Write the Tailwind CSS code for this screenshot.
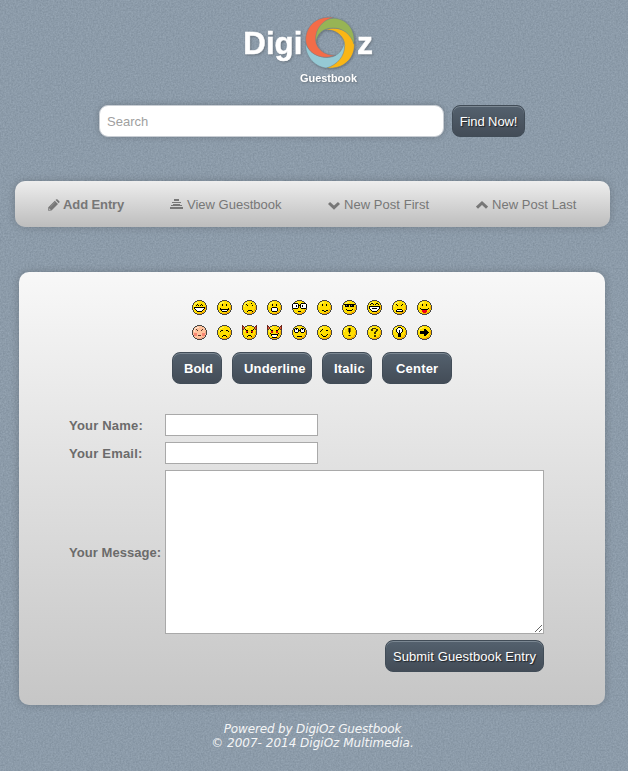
<!DOCTYPE html>
<html lang="en">
<head>
<meta charset="utf-8">
<title>DigiOz Guestbook</title>
<script src="https://cdn.jsdelivr.net/npm/@tailwindcss/browser@4"></script>
</head>
<body class="relative isolate h-[771px] w-[628px] overflow-hidden bg-[#8c9baa] font-['Liberation_Sans',Arial,sans-serif] text-[13px] leading-4 text-[#6b6b6b]">
<!-- Page grain -->
<svg class="absolute inset-0 -z-10" width="628" height="771" aria-hidden="true">
  <filter id="grain" x="0" y="0" width="100%" height="100%" color-interpolation-filters="sRGB">
    <feTurbulence type="fractalNoise" baseFrequency="0.6" numOctaves="2" seed="4"/>
    <feColorMatrix values="0.12 0 0 0 0.489  0.12 0 0 0 0.548  0.12 0 0 0 0.604  0 0 0 0 1"/>
  </filter>
  <rect width="628" height="771" filter="url(#grain)"/>
</svg>

<header class="flex flex-col">
  <svg class="mt-2 ml-[234px] h-[84px] w-[150px] drop-shadow-[1px_1px_1px_rgba(0,0,0,0.25)]" viewBox="0 0 450 252" aria-label="DigiOz Guestbook">
    <g stroke="#71808c" stroke-width="1.5">
      <path fill="#95c9d4" d="M215 105C225 135 255 150 285 148C315 146 330 120 332 95C342 140 315 180 285 180C245 182 212 145 215 105Z"/>
      <path fill="#fab615" d="M272 66C300 52 361 65 361 112C361 150 330 185 278 180C310 170 332 145 332 112C332 85 305 62 272 66Z"/>
      <path fill="#97b455" d="M245 108C238 62 262 31 298 31C335 31 365 62 360 108C350 78 326 60 298 60C264 60 248 80 245 108Z"/>
      <path fill="#f36c48" d="M300 28C240 22 215 62 215 95C215 132 258 160 305 142C272 144 247 122 245 97C243 65 264 36 300 28Z"/>
    </g>
    <g fill="#fff" font-family="Liberation Sans, Arial, sans-serif" font-weight="700">
      <text x="28" y="137" font-size="94" stroke="#fff" stroke-width="1.5" textLength="177" lengthAdjust="spacingAndGlyphs">Digi</text>
      <text x="369" y="137" font-size="94" stroke="#fff" stroke-width="1.5" textLength="48" lengthAdjust="spacingAndGlyphs">z</text>
      <text x="198" y="221" font-size="32" textLength="171" lengthAdjust="spacingAndGlyphs">Guestbook</text>
    </g>
  </svg>
  <form class="mt-[13px] ml-[99px] flex gap-2">
    <input placeholder="Search" class="h-8 w-[345px] rounded-[9px] border border-[#c9ced4] bg-white px-[7px] shadow-[0_0_6px_rgba(0,0,0,0.2)] placeholder:text-[#a0a0a0]">
    <button type="button" class="h-8 w-[73px] rounded-[8px] border border-[#414c57] bg-linear-to-b from-[#54616e] to-[#434c57] pt-[2px] tracking-[-0.1px] whitespace-nowrap text-white shadow-[inset_0_1px_0_#7b8792] text-shadow-[1px_1px_1px_rgba(0,0,0,0.6)]">Find Now!</button>
  </form>
</header>

<nav class="mt-11 ml-[15px] flex h-[46px] w-[595px] items-center gap-[46px] rounded-[10px] bg-linear-to-b from-[#eeeeee] to-[#bdbdbd] pt-[2px] pl-[33px] whitespace-nowrap text-[#777] shadow-[0_0_8px_rgba(0,0,0,0.2)]">
  <a class="flex w-[76px] items-center gap-[3px] font-bold tracking-[-0.1px]"><svg class="h-3 w-3 shrink-0" viewBox="0 0 12 12" fill="#777"><path d="M0.3 8.3L6.8 1.8L10 5L3.5 11.5L0.2 11.8Z"/><path d="M7.5 1.1L8.4.3Q9 0 9.6.5L11.3 2.2Q11.8 2.8 11.4 3.4L10.7 4.2Z"/><path d="M1.2 9.3L2.7 10.8L1.4 10.9Z" fill="#d6d6d6"/><path d="M2.4 7.9L6.8 3.5" stroke="#aaa" stroke-width=".5"/></svg>Add Entry</a>
  <a class="flex w-[112px] items-center gap-1"><svg class="-mt-[2px] h-[10px] w-[13px] shrink-0" viewBox="0 0 13 10" fill="#777" shape-rendering="crispEdges"><path d="M4 0h5v1H4zM4 1h5v1H4zM2 3h9v1H2zM3 5h7v1H3zM1 6h11v1H1zM0 8h13v2H0z"/></svg>View Guestbook</a>
  <a class="flex w-[102px] items-center gap-1 tracking-[0.05px]"><svg class="-mt-px h-3 w-3 shrink-0" viewBox="0 0 12 12" fill="none" stroke="#777" stroke-width="3"><path d="M1 4L6 8.7L11 4"/></svg>New Post First</a>
  <a class="flex w-[101px] items-center gap-1 tracking-[0.05px]"><svg class="-mt-px h-3 w-3 shrink-0" viewBox="0 0 12 12" fill="none" stroke="#777" stroke-width="3"><path d="M1 8.7L6 4L11 8.7"/></svg>New Post Last</a>
</nav>

<main class="mt-[45px] ml-[19px] h-[433px] w-[586px] rounded-[10px] bg-linear-to-b from-[#f8f8f8] to-[#c6c6c6] pt-7 shadow-[0_0_8px_rgba(0,0,0,0.2)]">
  <div id="smileys" class="ml-[173px] grid w-[240px] grid-cols-[repeat(10,15px)] gap-[10px]"></div>
  <div class="mt-3 ml-[153px] flex gap-[10px] font-bold text-white text-shadow-[1px_1px_1px_rgba(0,0,0,0.6)]">
    <button class="h-8 w-[50px] rounded-[8px] border border-[#414c57] bg-linear-to-b from-[#54616e] to-[#434c57] pt-[2px] pl-[11px] text-left shadow-[inset_0_1px_0_#7b8792]">Bold</button>
    <button class="h-8 w-[80px] rounded-[8px] border border-[#414c57] bg-linear-to-b from-[#54616e] to-[#434c57] pt-[2px] pl-[11px] text-left tracking-[0.2px] shadow-[inset_0_1px_0_#7b8792]">Underline</button>
    <button class="h-8 w-[50px] rounded-[8px] border border-[#414c57] bg-linear-to-b from-[#54616e] to-[#434c57] pt-[2px] pl-[11px] text-left tracking-[0.2px] shadow-[inset_0_1px_0_#7b8792]">Italic</button>
    <button class="h-8 w-[70px] rounded-[8px] border border-[#414c57] bg-linear-to-b from-[#54616e] to-[#434c57] pt-[2px] pl-[13px] text-left tracking-[0.2px] shadow-[inset_0_1px_0_#7b8792]">Center</button>
  </div>
  <form class="mt-[30px] ml-[50px] grid w-[475px] grid-cols-[96px_379px] items-center gap-y-[6px] font-bold whitespace-nowrap">
    <label class="pt-[2px] tracking-[0.2px]" for="name">Your Name:</label><input id="name" class="h-[22px] w-[153px] border border-[#a9a9a9] bg-white">
    <label class="pt-[2px] tracking-[0.2px]" for="email">Your Email:</label><input id="email" class="h-[22px] w-[153px] border border-[#a9a9a9] bg-white">
    <label class="pt-[2px] tracking-[0.05px]" for="msg">Your Message:</label><textarea id="msg" class="block h-[164px] w-[379px] border border-[#a9a9a9] bg-white"></textarea>
    <button type="button" class="col-start-2 h-8 w-[159px] justify-self-end rounded-[8px] border border-[#414c57] bg-linear-to-b from-[#54616e] to-[#434c57] pt-[2px] font-normal tracking-[0.1px] text-white shadow-[inset_0_1px_0_#7b8792] text-shadow-[1px_1px_1px_rgba(0,0,0,0.6)]">Submit Guestbook Entry</button>
  </form>
</main>

<footer class="mt-[17px] -ml-[3px] text-center font-['DejaVu_Sans',Verdana,sans-serif] text-[12px] leading-[14px] text-[#f4f5f6] italic">
  <p class="tracking-[-0.15px]">Powered by DigiOz Guestbook</p>
  <p>© 2007- 2014 DigiOz Multimedia.</p>
</footer>

<script>
// Each face is a list of "colour:x,y,w,h x,y,w,h" runs on a 15x15 pixel grid.
const faces = [
  ['#000:5,4,1,1 9,4,1,1 4,5,1,1 6,5,1,1 8,5,1,1 10,5,1,1 2,7,11,1 2,8,1,1 12,8,1,1 3,9,1,1 11,9,1,1 4,10,1,1 10,10,1,1 5,11,5,1', '#fff:3,8,9,1 4,9,7,1 5,10,5,1'],
  ['#000:5,4,1,2 9,4,1,2 3,8,1,1 11,8,1,1 3,9,9,1 4,10,1,1 10,10,1,1 5,11,5,1', '#fff:5,10,5,1'],
  ['#000:5,5,1,1 10,5,1,1 4,4,1,1 9,3,1,1 5,11,1,1 6,10,4,1 10,11,1,1'],
  ['#000:5,4,1,2 9,4,1,2 5,7,5,1 4,8,1,3 10,8,1,3 5,11,5,1', '#fff:5,8,5,3'],
  ['#000:1,3,5,1 0,4,1,4 6,4,1,4 1,8,5,1 9,3,5,1 8,4,1,4 14,4,1,4 9,8,5,1 7,5,1,1 6,11,3,1', '#fff:1,4,5,4 9,4,5,4', '#000:4,5,1,2 10,5,1,2'],
  ['#000:5,4,1,2 9,4,1,2 5,10,2,1 7,11,2,1 9,10,2,1'],
  ['#000:2,4,11,1 3,5,4,2 8,5,4,2 4,9,1,1 5,10,5,1 10,9,1,1', '#777:4,5,1,1 9,5,1,1'],
  ['#000:3,4,1,1 4,3,2,1 6,4,1,1 8,4,1,1 9,3,2,1 11,4,1,1 2,6,11,1 2,7,1,2 12,7,1,2 3,9,1,1 11,9,1,1 4,10,1,1 10,10,1,1 5,11,5,1', '#fff:3,7,9,2 4,9,7,1 5,10,5,1', '#000:5,8,5,1'],
  ['#000:4,4,1,1 5,5,1,1 9,5,1,1 10,4,1,1 5,9,5,1 4,10,1,1 10,10,1,1 4,11,7,1', '#fff:5,10,5,1'],
  ['#000:5,4,1,2 9,4,1,2 3,8,1,1 11,8,1,1 4,9,7,1', '#f00018:5,10,5,2 6,12,3,1'],
  ['#f78572:2,8,3,3 10,8,3,3', '#55362c:4,4,1,1 10,4,1,1 5,5,1,1 9,5,1,1 6,10,3,1'],
  ['#000:4,5,2,1 9,5,2,1 3,6,1,1 11,6,1,1 6,10,3,1 5,11,1,1 9,11,1,1'],
  ['#000:3,4,1,1 4,5,2,1 9,5,2,1 11,4,1,1 5,11,1,1 6,10,3,1 9,11,1,1', '#d6150b:4,6,2,2 9,6,2,2', '#000:5,7,1,1 9,7,1,1'],
  ['#000:3,4,1,1 4,5,2,1 9,5,2,1 11,4,1,1 3,8,1,1 11,8,1,1 4,9,7,1 4,10,1,1 10,10,1,1 5,12,5,1', '#d6150b:4,6,2,2 9,6,2,2', '#fff:5,10,5,1 6,11,3,1'],
  ['#000:3,3,3,1 2,4,1,3 6,4,1,3 3,7,3,1 9,3,3,1 8,4,1,3 12,4,1,3 9,7,3,1 7,5,1,1 5,11,5,1', '#fff:3,4,3,3 9,4,3,3', '#000:4,4,1,1 10,4,1,1'],
  ['#000:4,5,1,1 5,4,1,1 3,6,1,1 9,5,2,1 4,9,1,1 5,10,1,1 6,11,3,1 9,10,1,1 10,9,1,1'],
  ['#7a6500:6,3,3,4 7,7,1,2 6,10,3,1', '#000:7,3,1,5 7,10,1,1'],
  ['#403600:5,3,4,1 4,4,2,2 9,4,2,2 8,6,2,1 7,7,2,2 7,10,2,2'],
  ['#000:6,2,3,1 5,3,1,1 9,3,1,1 4,4,1,3 10,4,1,3 5,7,1,1 9,7,1,1 6,8,3,4', '#fff:6,3,3,1 5,4,5,3 6,7,3,1', '#000:7,5,1,5'],
  ['#000:3,6,6,3 7,4,1,7 8,4,1,7 9,5,1,5 10,6,1,3 11,7,1,1']
];
const rects = (colour, spec) => spec.split(' ').map(s => {
  const [x, y, w, h] = s.split(',');
  return `<rect x="${x}" y="${y}" width="${w}" height="${h}" fill="${colour}"/>`;
}).join('');
// Left edge of the round face on each row
const inset = [5, 3, 2, 1, 1, 0, 0, 0, 0, 0, 1, 1, 2, 3, 5];
document.getElementById('smileys').innerHTML = faces.map((face, i) => {
  const pink = i === 10;
  let body = inset.map((x, y) => rects('#464542', `${x},${y},${15 - 2 * x},1`)).join('');
  const inner = [5, 3, 2, 2, 1, 1, 1, 1, 1, 2, 2, 3, 5];
  body += inner.map((x, k) => rects(pink ? '#ffc29c' : '#ffdf00', `${x},${k + 1},${15 - 2 * x},1`)).join('');
  body += rects(pink ? '#f2a98a' : '#f8ad00', '13,6,1,3 12,9,1,2 11,11,1,1 9,12,3,1 5,13,5,1');
  body += rects(pink ? '#ffe0cc' : '#fff34d', '4,2,3,1 3,3,2,1 2,4,1,3');
  if (i === 12 || i === 13) body += rects('#6b241c', '0,0,1,5 1,1,1,3 2,2,1,2 14,0,1,5 13,1,1,3 12,2,1,2') + rects('#ef5c30', '1,2,1,2 13,2,1,2');
  body += face.map(f => rects(...f.split(':'))).join('');
  return `<svg class="block h-[15px] w-[15px]" viewBox="0 0 15 15" shape-rendering="crispEdges">${body}</svg>`;
}).join('');
</script>
</body>
</html>
